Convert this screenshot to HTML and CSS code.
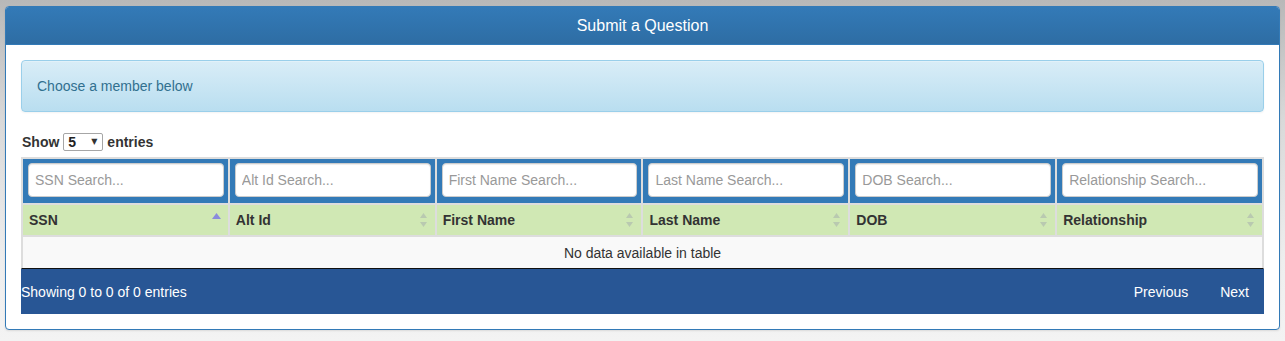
FILE: index.html
```html
<!DOCTYPE html>
<html>
<head>
<meta charset="utf-8">
<title>Submit a Question</title>
<link rel="stylesheet" href="styles.css">
</head>
<body>
<div class="panel">
  <div class="panel-heading">Submit a Question</div>
  <div class="panel-body">
    <div class="alert">Choose a member below</div>
    <div class="length">
      <span>Show</span>
      <span class="select-wrap">
        <select class="select"><option>5</option><option>10</option></select>
        <span class="caret">▼</span>
      </span>
      <span>entries</span>
    </div>
    <table class="grid">
      <thead>
        <tr class="search-row">
          <td><input class="search" placeholder="SSN Search..."></td>
          <td><input class="search" placeholder="Alt Id Search..."></td>
          <td><input class="search" placeholder="First Name Search..."></td>
          <td><input class="search" placeholder="Last Name Search..."></td>
          <td><input class="search" placeholder="DOB Search..."></td>
          <td><input class="search" placeholder="Relationship Search..."></td>
        </tr>
        <tr class="head-row">
          <th>SSN<svg class="sort" width="9" height="16" viewBox="0 0 9 16"><polygon points="4.5,0 9,6 0,6" fill="#8a8bdc"/></svg></th>
          <th>Alt Id<svg class="sort" width="9" height="16" viewBox="0 0 9 16"><polygon points="4.5,0 8,5 1,5" fill="#b9c9b0"/><polygon points="1,9 8,9 4.5,14" fill="#b9c9b0"/></svg></th>
          <th>First Name<svg class="sort" width="9" height="16" viewBox="0 0 9 16"><polygon points="4.5,0 8,5 1,5" fill="#b9c9b0"/><polygon points="1,9 8,9 4.5,14" fill="#b9c9b0"/></svg></th>
          <th>Last Name<svg class="sort" width="9" height="16" viewBox="0 0 9 16"><polygon points="4.5,0 8,5 1,5" fill="#b9c9b0"/><polygon points="1,9 8,9 4.5,14" fill="#b9c9b0"/></svg></th>
          <th>DOB<svg class="sort" width="9" height="16" viewBox="0 0 9 16"><polygon points="4.5,0 8,5 1,5" fill="#b9c9b0"/><polygon points="1,9 8,9 4.5,14" fill="#b9c9b0"/></svg></th>
          <th>Relationship<svg class="sort" width="9" height="16" viewBox="0 0 9 16"><polygon points="4.5,0 8,5 1,5" fill="#b9c9b0"/><polygon points="1,9 8,9 4.5,14" fill="#b9c9b0"/></svg></th>
        </tr>
      </thead>
      <tbody>
        <tr class="empty-row"><td colspan="6">No data available in table</td></tr>
      </tbody>
    </table>
    <div class="table-foot">
      <div class="info">Showing 0 to 0 of 0 entries</div>
      <div class="paging">
        <span class="page-btn">Previous</span>
        <span class="page-btn">Next</span>
      </div>
    </div>
  </div>
</div>
</body>
</html>
```
FILE: styles.css
```css
* { box-sizing: border-box; }
html, body { height: 100%; }
body {
  margin: 0;
  padding: 6px 5px 0 5px;
  font-family: "Liberation Sans", Arial, sans-serif;
  font-size: 14px;
  color: #333;
  background: linear-gradient(to bottom, #b8b8b8 0px, #d9d9d9 120px, #eeeeee 260px, #f3f3f3 341px);
}
.panel {
  width: 1275px;
  background: #fff;
  border: 1px solid #337ab7;
  border-radius: 4px;
  box-shadow: 0 1px 2px rgba(0,0,0,0.1);
  overflow: hidden;
}
.panel-heading {
  height: 38px;
  line-height: 37px;
  text-align: center;
  color: #fff;
  font-size: 16px;
  background: linear-gradient(to bottom, #337ab7 0%, #2e6da4 100%);
  border-bottom: 1px solid #337ab7;
}
.panel-body {
  padding: 15px;
}
.alert {
  height: 52px;
  padding: 15px;
  line-height: 20px;
  color: #31708f;
  background: linear-gradient(to bottom, #d9edf7 0%, #b9def0 100%);
  border: 1px solid #9acfea;
  border-radius: 4px;
  box-shadow: inset 0 1px 0 rgba(255,255,255,0.25), 0 1px 2px rgba(0,0,0,0.05);
  margin-bottom: 20px;
}
.length {
  height: 20px;
  display: flex;
  align-items: center;
  gap: 4px;
  font-weight: bold;
  margin-left: 1px;
  margin-bottom: 5px;
}
.select-wrap {
  position: relative;
  display: inline-block;
  width: 40px;
  height: 18px;
}
.select {
  -webkit-appearance: none;
  appearance: none;
  width: 40px;
  height: 18px;
  border: 1px solid #a6a6a6;
  border-radius: 2px;
  background: #fff;
  font-family: "Liberation Sans", Arial, sans-serif;
  font-size: 14px;
  font-weight: bold;
  color: #222;
  padding: 0 0 0 4px;
  line-height: 16px;
}
.caret {
  position: absolute;
  right: 6px;
  top: 4px;
  font-size: 8px;
  color: #333;
  pointer-events: none;
  font-family: "DejaVu Sans", sans-serif;
}
.grid {
  width: 1243px;
  table-layout: fixed;
  border-collapse: separate;
  border-spacing: 0;
  border: 1px solid #dddddd;
  border-bottom: 1px solid #111;
}
.grid td, .grid th {
  border: 1px solid #dddddd;
}
.search-row td {
  background: #337ab7;
  padding: 4px 4px 6px 5px;
}
.search {
  display: block;
  width: 100%;
  height: 34px;
  padding: 6px 6px;
  font-family: "Liberation Sans", Arial, sans-serif;
  font-size: 14px;
  color: #555;
  border: 1px solid #ccc;
  border-radius: 4px;
  background: #fff;
  box-shadow: inset 0 1px 1px rgba(0,0,0,0.075);
}
.search::placeholder { color: #999; }
.head-row th {
  position: relative;
  background: #d0e8b4;
  height: 32px;
  padding: 5px 30px 5px 6px;
  line-height: 20px;
  text-align: left;
  font-weight: bold;
  color: #333;
}
.sort {
  position: absolute;
  right: 7px;
  top: 8px;
}
.empty-row td {
  background: #f9f9f9;
  text-align: center;
  height: 32px;
  padding: 5px;
  line-height: 20px;
  border-bottom: 0;
  color: #333;
}
.table-foot {
  height: 45px;
  background: #285695;
  color: #fff;
  display: flex;
  align-items: center;
  justify-content: space-between;
}
.info {
  padding-top: 1px;
}
.paging {
  display: flex;
  padding-top: 1px;
}
.page-btn {
  padding: 0 14px 0 14px;
  margin-left: 4px;
}
.page-btn:last-child {
  padding-right: 15px;
}
```
